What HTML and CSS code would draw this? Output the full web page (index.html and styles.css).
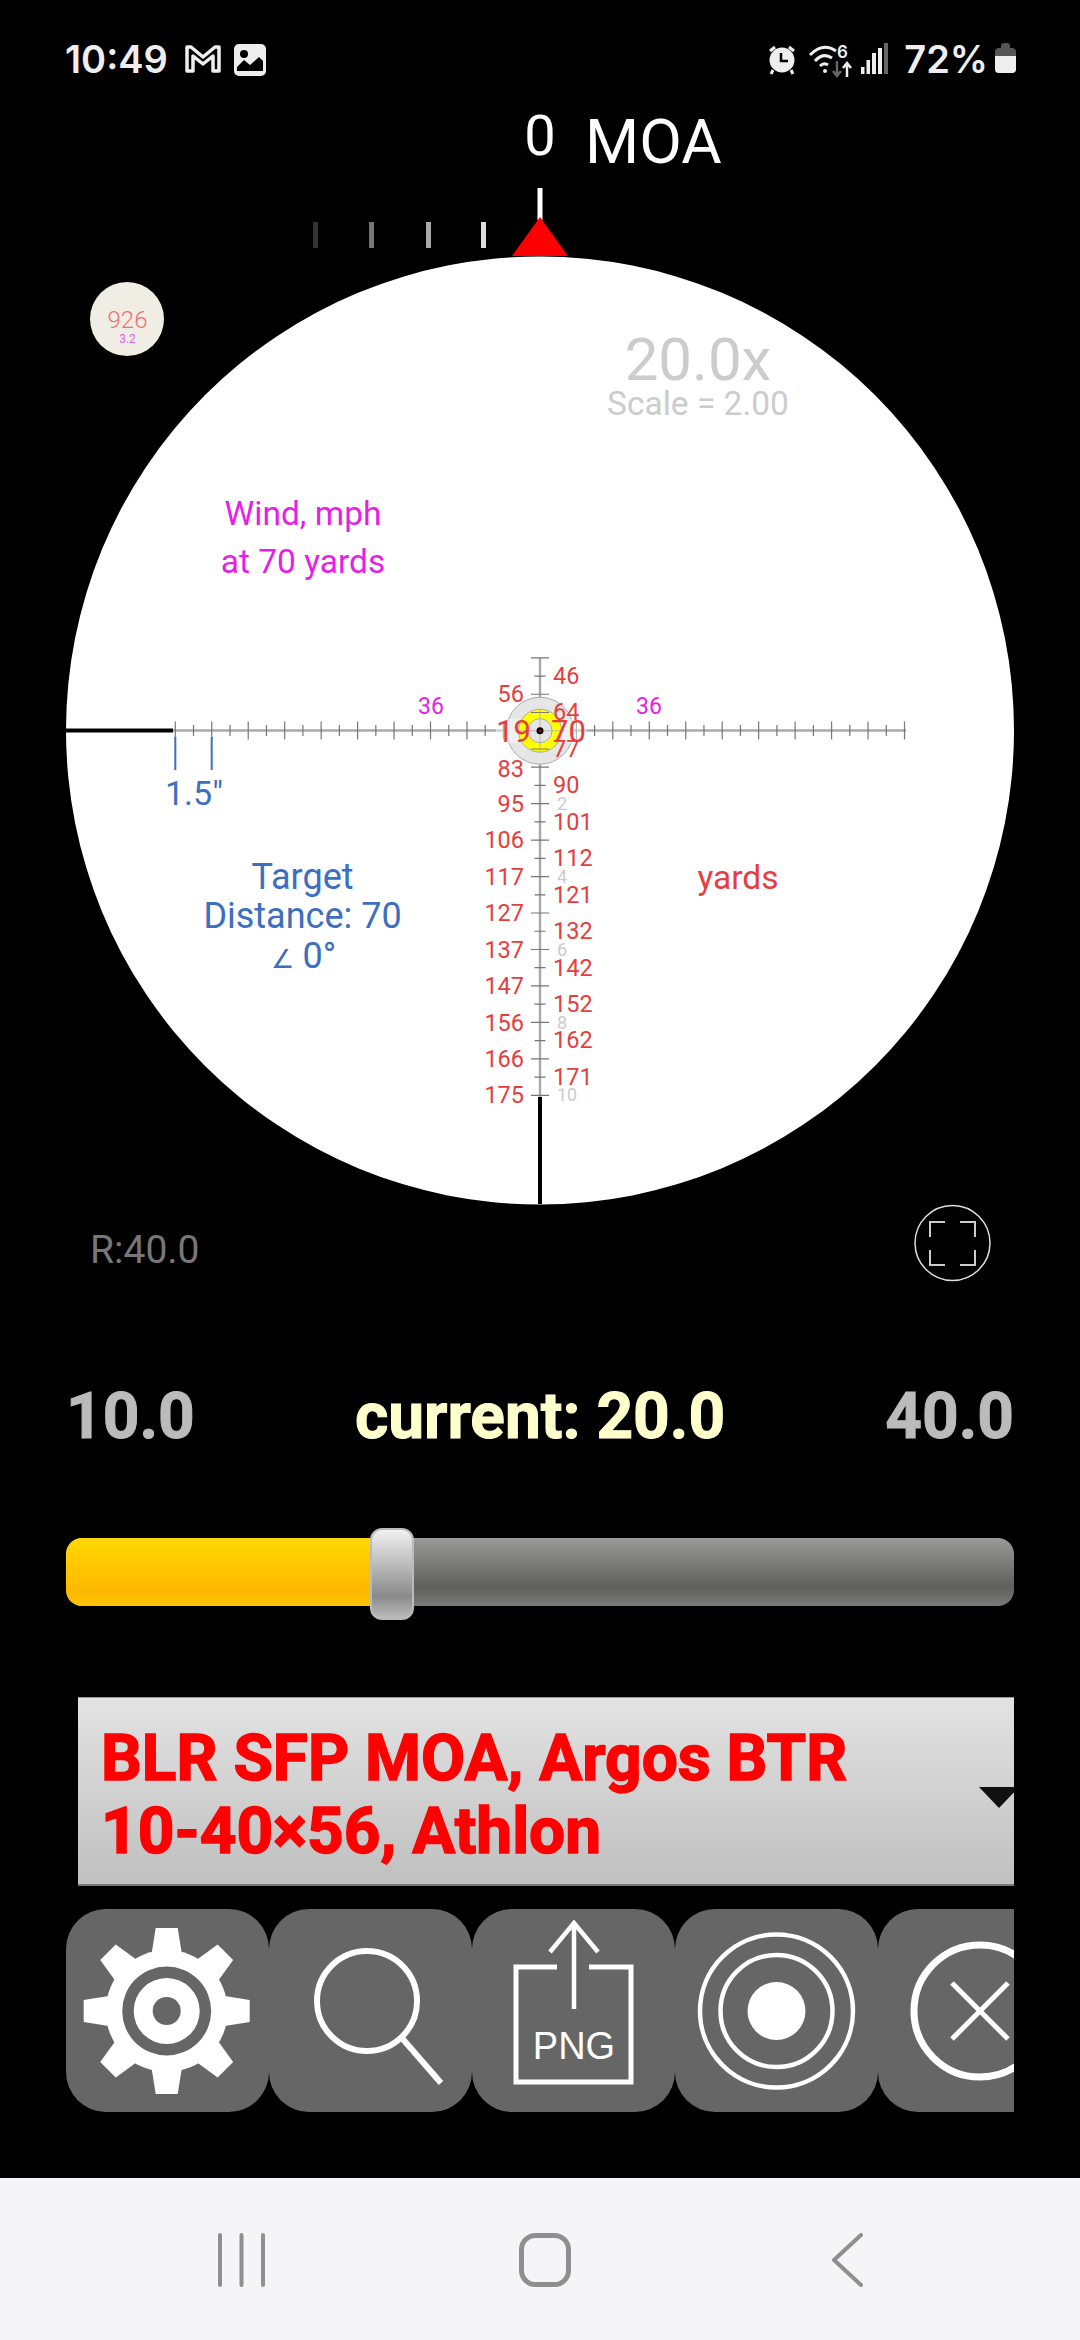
FILE: index.html
```html
<!DOCTYPE html>
<html lang="en">
<head>
  <meta charset="UTF-8" />
  <title>Ballistic Reticle</title>
  <meta name="viewport" content="width=device-width, initial-scale=1.0" />
  <link rel="stylesheet" href="styles.css">
</head>
<body>

<!-- STATUS BAR -->
<div class="status">
  <div class="status-group">
    <span class="status-text">10:49</span>
    <svg class="icon-mail" viewBox="0 0 36 28"><path d="M2 2 H6 L18 12 L30 2 H34 V26 H28 V11 L18 19 L8 11 V26 H2 Z"/></svg>
    <svg class="icon-photo" viewBox="0 0 32 32">
      <rect width="32" height="32" rx="5" fill="#eee"/>
      <circle cx="10" cy="10" r="4" fill="#000"/>
      <path d="M3 23 L10 16 L16 21 L25 13 L29 17 V27 H3 Z" fill="#000"/>
    </svg>
  </div>
  <div class="status-group">
    <svg class="icon-alarm" viewBox="0 0 30 30">
      <circle cx="15" cy="15" r="12.5" fill="#eee"/>
      <path d="M3 6 L8 2 M27 6 L22 2 M6 25 L4 29 M24 25 L26 29" stroke="#eee" stroke-width="3" fill="none"/>
      <path d="M14 8 V16 H21" stroke="#000" stroke-width="2.5" fill="none"/>
    </svg>
    <svg class="icon-wifi" viewBox="0 0 46 34">
      <g fill="none" stroke="#eee" stroke-width="3">
        <path d="M1 11 Q14 -2 27 7"/>
        <path d="M6 17 Q14 8 23 14"/>
        <path d="M11 22 Q15 18 19 21"/>
      </g>
      <circle cx="16" cy="27" r="2" fill="#eee"/>
      <text class="wifi-num" x="28" y="14">6</text>
      <path d="M28 17 V32 M24 27 L28 32 L32 27" fill="none" stroke="#666" stroke-width="2.5"/>
      <path d="M38 33 V19 M34 24 L38 19 L42 24" fill="none" stroke="#eee" stroke-width="2.5"/>
    </svg>
    <svg class="icon-signal" viewBox="0 0 28 31">
      <rect x="0" y="24" width="3.5" height="7" fill="#eee"/>
      <rect x="5.5" y="17" width="3.5" height="14" fill="#eee"/>
      <rect x="11" y="10" width="4" height="21" fill="#eee"/>
      <rect x="17" y="5" width="4" height="26" fill="#eee"/>
      <rect x="23" y="0" width="4" height="31" fill="#666"/>
    </svg>
    <span class="status-text status-batt">72%</span>
    <div class="battery"><div class="battery-cap"></div><div class="battery-fill"></div></div>
  </div>
</div>

<!-- SCOPE VIEW -->
<svg class="scope" viewBox="0 88 1080 1212">
  <!-- windage readout -->
  <text class="read-num" x="540" y="155">0</text>
  <text class="read-unit" x="585" y="163">MOA</text>
  <rect x="537.5" y="188" width="5" height="32" fill="#fff"/>
  <rect x="313" y="222" width="5" height="26" fill="#333"/>
  <rect x="369" y="222" width="5" height="26" fill="#777"/>
  <rect x="426" y="222" width="5" height="26" fill="#aaa"/>
  <rect x="481" y="222" width="5" height="26" fill="#ddd"/>
  <polygon points="540,217 568,256 512,256" fill="#f00"/>

  <circle cx="540" cy="730.5" r="474" fill="#fff"/>

  <!-- badge -->
  <circle cx="127" cy="319" r="37" fill="#f0ede4"/>
  <text class="badge-num" x="127.5" y="328">926</text>
  <text class="badge-sub" x="127.5" y="343">3.2</text>

  <text class="zoom-big" x="698" y="380">20.0x</text>
  <text class="zoom-small" x="698" y="415">Scale = 2.00</text>

  <text class="wind" x="303" y="525">Wind, mph</text>
  <text class="wind" x="303" y="573">at 70 yards</text>

  <text class="target" x="302.5" y="889">Target</text>
  <text class="target" x="302.5" y="928">Distance: 70</text>
  <text class="target" x="303.5" y="968"><tspan class="angle">∠</tspan> 0°</text>
  <text class="yards" x="738" y="889">yards</text>

  <!-- crosshair -->
  <path d="M66 730.5 H173 M540 1097 V1204" stroke="#000" stroke-width="4"/>
  <path d="M173 730.5 H906 M540 658 V1097" stroke="#aaa" stroke-width="2.5"/>
  <path class="ticks" d="M175.3 721.5
    v18m18.23-3.5v-11m18.23-3.5 v18m18.23-3.5v-11m18.23-3.5 v18m18.23-3.5v-11m18.23-3.5 v18m18.23-3.5v-11m18.23-3.5 v18m18.23-3.5v-11m18.23-3.5
    v18m18.23-3.5v-11m18.23-3.5 v18m18.23-3.5v-11m18.23-3.5 v18m18.23-3.5v-11m18.23-3.5 v18m18.23-3.5v-11m18.23-3.5 v18m18.23-3.5v-11m18.23-3.5
    v18m18.23-3.5v-11m18.23-3.5 v18m18.23-3.5v-11m18.23-3.5 v18m18.23-3.5v-11m18.23-3.5 v18m18.23-3.5v-11m18.23-3.5 v18m18.23-3.5v-11m18.23-3.5
    v18m18.23-3.5v-11m18.23-3.5 v18m18.23-3.5v-11m18.23-3.5 v18m18.23-3.5v-11m18.23-3.5 v18m18.23-3.5v-11m18.23-3.5 v18m18.23-3.5v-11m18.23-3.5
    v18"/>
  <path class="ticks" d="M531 657.8
    h18m-3.5 18.23h-11m-3.5 18.23 h18m-3.5 18.23h-11m-3.5 18.23 h18m-3.5 18.23h-11m-3.5 18.23 h18m-3.5 18.23h-11m-3.5 18.23
    h18m-3.5 18.23h-11m-3.5 18.23 h18m-3.5 18.23h-11m-3.5 18.23 h18m-3.5 18.23h-11m-3.5 18.23 h18m-3.5 18.23h-11m-3.5 18.23
    h18m-3.5 18.23h-11m-3.5 18.23 h18m-3.5 18.23h-11m-3.5 18.23 h18m-3.5 18.23h-11m-3.5 18.23 h18m-3.5 18.23h-11m-3.5 18.23
    h18"/>
  <path d="M175.3 737 V770 M211.7 737 V770" stroke="#3d6fc0" stroke-width="2"/>
  <text class="inch" x="165" y="805">1.5"</text>

  <!-- centre target -->
  <circle cx="540" cy="730.7" r="33.5" fill="#e6e6e6" stroke="#aaa"/>
  <rect x="496" y="719" width="34" height="24" fill="#fff" opacity=".45"/>
  <rect x="551" y="719" width="36" height="24" fill="#fff" opacity=".45"/>
  <circle cx="540" cy="730.7" r="21.5" fill="#ff0" stroke="#aaa"/>
  <circle cx="540" cy="730.7" r="12" fill="#e6e6e6" stroke="#aaa"/>
  <path class="ticks" d="M531 712.5h18M531 749h18"/>
  <path d="M519 730.7h42M540 710v42" stroke="#aaa" stroke-width="1.5" opacity=".5"/>
  <circle cx="540" cy="730.7" r="3.5" fill="#000"/>
  <circle cx="540" cy="730.7" r="1.3" fill="#c00"/>

  <!-- wind values -->
  <text class="wind-num" x="431" y="714">36</text>
  <text class="wind-num" x="649" y="714">36</text>

  <!-- range values left -->
  <g class="range-left">
    <text x="524" y="702">56</text>
    <text x="524" y="777">83</text>
    <text x="524" y="812">95</text>
    <text x="524" y="848">106</text>
    <text x="524" y="885">117</text>
    <text x="524" y="921">127</text>
    <text x="524" y="958">137</text>
    <text x="524" y="994">147</text>
    <text x="524" y="1031">156</text>
    <text x="524" y="1067">166</text>
    <text x="524" y="1103">175</text>
  </g>
  <!-- range values right -->
  <g class="range-right">
    <text x="553" y="684">46</text>
    <text x="553" y="720">64</text>
    <text x="553" y="757">77</text>
    <text x="553" y="793">90</text>
    <text x="553" y="830">101</text>
    <text x="553" y="866">112</text>
    <text x="553" y="903">121</text>
    <text x="553" y="939">132</text>
    <text x="553" y="976">142</text>
    <text x="553" y="1012">152</text>
    <text x="553" y="1048">162</text>
    <text x="553" y="1085">171</text>
  </g>
  <g class="moa-num">
    <text x="557" y="810">2</text>
    <text x="557" y="883">4</text>
    <text x="557" y="956">6</text>
    <text x="557" y="1029">8</text>
    <text x="557" y="1101">10</text>
  </g>
  <text class="big-range" x="496" y="742">19</text>
  <text class="big-range" x="551" y="742">70</text>

  <text class="range-r" x="90" y="1263">R:40.0</text>

  <!-- fullscreen -->
  <circle cx="952.5" cy="1243" r="37.5" fill="none" stroke="#ddd" stroke-width="1.5"/>
  <path d="M930 1237 V1222 H945 M960 1222 H975 V1237 M975 1250 V1265 H960 M945 1265 H930 V1250" fill="none" stroke="#ccc" stroke-width="2"/>
</svg>

<!-- MAGNIFICATION -->
<div class="mag-row">
  <span class="mag-end">10.0</span>
  <span class="mag-current">current: 20.0</span>
  <span class="mag-end">40.0</span>
</div>

<div class="slider">
  <div class="slider-fill"></div>
  <div class="slider-thumb"></div>
</div>

<!-- RETICLE SELECT -->
<div class="picker">
  <div class="picker-text">BLR SFP MOA, Argos BTR<br>10-40×56, Athlon</div>
  <div class="picker-arrow"></div>
</div>

<!-- TOOLS -->
<div class="tools">
  <button class="tool">
    <svg viewBox="0 0 203 203">
      <g transform="translate(100.7 102)" fill="#fff">
        <circle r="61"/>
        <polygon id="tooth" points="-15,-58 -11,-83 11,-83 15,-58"/>
        <use href="#tooth" transform="rotate(45)"/>
        <use href="#tooth" transform="rotate(90)"/>
        <use href="#tooth" transform="rotate(135)"/>
        <use href="#tooth" transform="rotate(180)"/>
        <use href="#tooth" transform="rotate(225)"/>
        <use href="#tooth" transform="rotate(270)"/>
        <use href="#tooth" transform="rotate(315)"/>
        <circle r="44.5" fill="#666"/>
        <circle r="33"/>
        <circle r="14" fill="#666"/>
      </g>
    </svg>
  </button>
  <button class="tool">
    <svg viewBox="0 0 203 203" fill="none" stroke="#fff" stroke-width="6">
      <circle cx="98" cy="92" r="50"/>
      <path d="M132 128 L172 174"/>
    </svg>
  </button>
  <button class="tool">
    <svg viewBox="0 0 203 203" fill="none" stroke="#fff" stroke-width="5">
      <path d="M85 58 H44 V173 H159 V58 H117"/>
      <path d="M102 100 V16 M78 43 L102 14 L126 43" stroke-width="4.5"/>
      <text class="png-label" x="102" y="150">PNG</text>
    </svg>
  </button>
  <button class="tool">
    <svg viewBox="0 0 203 203" fill="none" stroke="#fff" stroke-width="4.5">
      <circle cx="101.5" cy="102" r="76.5"/>
      <circle cx="101.5" cy="102" r="56"/>
      <circle cx="101.5" cy="102" r="29" fill="#fff" stroke="none"/>
    </svg>
  </button>
  <button class="tool">
    <svg viewBox="0 0 203 203" fill="none" stroke="#fff">
      <circle cx="102" cy="102" r="66" stroke-width="7"/>
      <path d="M74 74 L130 130 M130 74 L74 130" stroke-width="5"/>
    </svg>
  </button>
</div>

<!-- NAV BAR -->
<div class="nav">
  <svg class="nav-recent" viewBox="0 0 48 54" fill="none" stroke="#8f8f8f" stroke-linecap="round">
    <path d="M2 2 V52 M23.5 2 V52 M45 2 V52" stroke-width="4"/>
  </svg>
  <svg class="nav-home" viewBox="0 0 54 54" fill="none" stroke="#8f8f8f">
    <rect x="2.5" y="2.5" width="47" height="49" rx="14" stroke-width="5"/>
  </svg>
  <svg class="nav-back" viewBox="0 0 32 54" fill="none" stroke="#8f8f8f" stroke-linecap="round" stroke-linejoin="round">
    <path d="M29 2 L2 27 L29 52" stroke-width="4"/>
  </svg>
</div>

</body>
</html>
```

FILE: styles.css
```css
html, body {
  margin: 0;
  padding: 0;
}

body {
  width: 1080px;
  height: 2340px;
  background-color: #000;
  font-family: 'Roboto', sans-serif;
  display: flex;
  flex-direction: column;
  overflow: hidden;
}

/* status bar */
.status {
  height: 88px;
  padding: 0 64px 0 65px;
  display: flex;
  justify-content: space-between;
  align-items: flex-start;
  flex: none;
}

.status-group {
  display: flex;
  align-items: flex-start;
  padding-top: 43px;
}

.status-text {
  font-family: 'Inter', sans-serif;
  font-weight: 600;
  font-size: 38px;
  line-height: 32px;
  color: #eee;
}

.status-batt {
  margin-left: 15px;
}

.icon-mail {
  width: 36px;
  height: 28px;
  margin: 2px 0 0 17px;
  fill: none;
  stroke: #eee;
  stroke-width: 3.5;
  stroke-linejoin: round;
}

.icon-photo {
  width: 32px;
  height: 32px;
  margin: 1px 0 0 13px;
}

.icon-alarm {
  width: 30px;
  height: 30px;
  margin-top: 2px;
}

.icon-wifi {
  width: 46px;
  height: 34px;
  margin: 1px 0 0 12px;
  overflow: visible;
}

.wifi-num {
  font-family: 'Inter', sans-serif;
  font-size: 17px;
  font-weight: 600;
  fill: #eee;
}

.icon-signal {
  width: 28px;
  height: 31px;
  margin-left: 6px;
}

.battery {
  width: 21px;
  height: 25px;
  margin-left: 7px;
  margin-top: 5px;
  position: relative;
  background: #555;
  border-radius: 4px;
}

.battery-cap {
  position: absolute;
  top: -5px;
  left: 6px;
  width: 9px;
  height: 6px;
  background: #555;
  border-radius: 3px 3px 0 0;
}

.battery-fill {
  position: absolute;
  left: 0;
  right: 0;
  bottom: 0;
  height: 17px;
  background: #eee;
  border-radius: 0 0 4px 4px;
}

/* scope */
.scope {
  display: block;
  width: 1080px;
  height: 1212px;
  flex: none;
}

.scope text {
  font-family: 'Roboto', sans-serif;
}

.read-num {
  font-size: 56px;
  fill: #fff;
  text-anchor: middle;
}

.read-unit {
  font-size: 62px;
  fill: #fff;
}

.badge-num {
  font-size: 24px;
  font-weight: 300;
  fill: #f07070;
  text-anchor: middle;
}

.badge-sub {
  font-size: 12px;
  fill: #e060f0;
  text-anchor: middle;
}

.zoom-big {
  font-size: 60px;
  fill: #ccc;
  text-anchor: middle;
}

.zoom-small {
  font-size: 33.5px;
  fill: #ccc;
  text-anchor: middle;
}

.wind {
  font-size: 33.5px;
  fill: #e61ee6;
  text-anchor: middle;
}

.target {
  font-size: 36px;
  fill: #3d6fc0;
  text-anchor: middle;
}

.angle {
  font-size: 26px;
}

.yards {
  font-size: 33.5px;
  fill: #e53e3e;
  text-anchor: middle;
}

.inch {
  font-size: 34px;
  fill: #3d6fc0;
}

.ticks {
  fill: none;
  stroke: #777;
  stroke-width: 1.2;
}

.wind-num {
  font-size: 23px;
  fill: #e61ee6;
  text-anchor: middle;
}

.range-left text,
.range-right text {
  font-size: 23.5px;
  fill: #e53e3e;
}

.range-left text {
  text-anchor: end;
}

.moa-num text {
  font-size: 18px;
  fill: #ccc;
}

.big-range {
  font-size: 31px;
  fill: #e53e3e;
}

.range-r {
  font-size: 39px;
  fill: #777;
}

/* magnification */
.mag-row {
  margin: 79px 66px 0;
  height: 74px;
  display: flex;
  justify-content: space-between;
  align-items: center;
  font-weight: 700;
  font-size: 64px;
  -webkit-text-stroke: 1px currentColor;
  flex: none;
}

.mag-end {
  color: #bbb;
}

.mag-current {
  color: #ffffcc;
}

.slider {
  position: relative;
  margin: 85px 66px 0;
  height: 68px;
  border-radius: 16px;
  background: linear-gradient(#9a9a9a, #5f5f5c 72%, #7a7a7a);
  flex: none;
}

.slider-fill {
  width: 306px;
  height: 100%;
  border-radius: 16px 0 0 16px;
  background: linear-gradient(#ffd800, #ffb800 78%, #ffc400);
}

.slider-thumb {
  position: absolute;
  left: 304px;
  top: -10px;
  width: 44px;
  height: 92px;
  box-sizing: border-box;
  border-radius: 12px;
  border: 2px solid #bbb;
  background: linear-gradient(#f0f0f0, #c8c8c8 30%, #8a8a8a 75%, #bbb);
}

/* reticle picker */
.picker {
  position: relative;
  margin: 91px 66px 0 78px;
  height: 189px;
  box-sizing: border-box;
  padding: 24px 0 0 23px;
  border-top: 1px solid #999;
  border-bottom: 2px solid #777;
  background: linear-gradient(#e2e2e2, #c0c0c0);
  overflow: hidden;
  flex: none;
}

.picker-text {
  font-weight: 700;
  font-size: 64px;
  line-height: 73px;
  color: #f00;
  -webkit-text-stroke: 1.5px #f00;
}

.picker-arrow {
  position: absolute;
  left: 901px;
  top: 89px;
  border-left: 20px solid transparent;
  border-right: 20px solid transparent;
  border-top: 21px solid #111;
}

/* tool buttons */
.tools {
  margin: 23px 66px 0;
  display: flex;
  overflow: hidden;
  flex: none;
}

.tool {
  flex: 0 0 203px;
  height: 203px;
  padding: 0;
  border: none;
  border-radius: 40px;
  background-color: #666;
}

.tool svg {
  display: block;
  width: 203px;
  height: 203px;
}

.png-label {
  font-family: 'Liberation Sans', sans-serif;
  font-size: 38px;
  fill: #fff;
  stroke: none;
  text-anchor: middle;
}

/* nav bar */
.nav {
  margin-top: auto;
  height: 162px;
  box-sizing: border-box;
  padding: 55px 0 0 218px;
  display: flex;
  align-items: flex-start;
  background-color: #f5f5f7;
  flex: none;
}

.nav-recent {
  width: 48px;
  height: 54px;
}

.nav-home {
  width: 54px;
  height: 54px;
  margin-left: 253px;
}

.nav-back {
  width: 32px;
  height: 54px;
  margin-left: 259px;
}
```
